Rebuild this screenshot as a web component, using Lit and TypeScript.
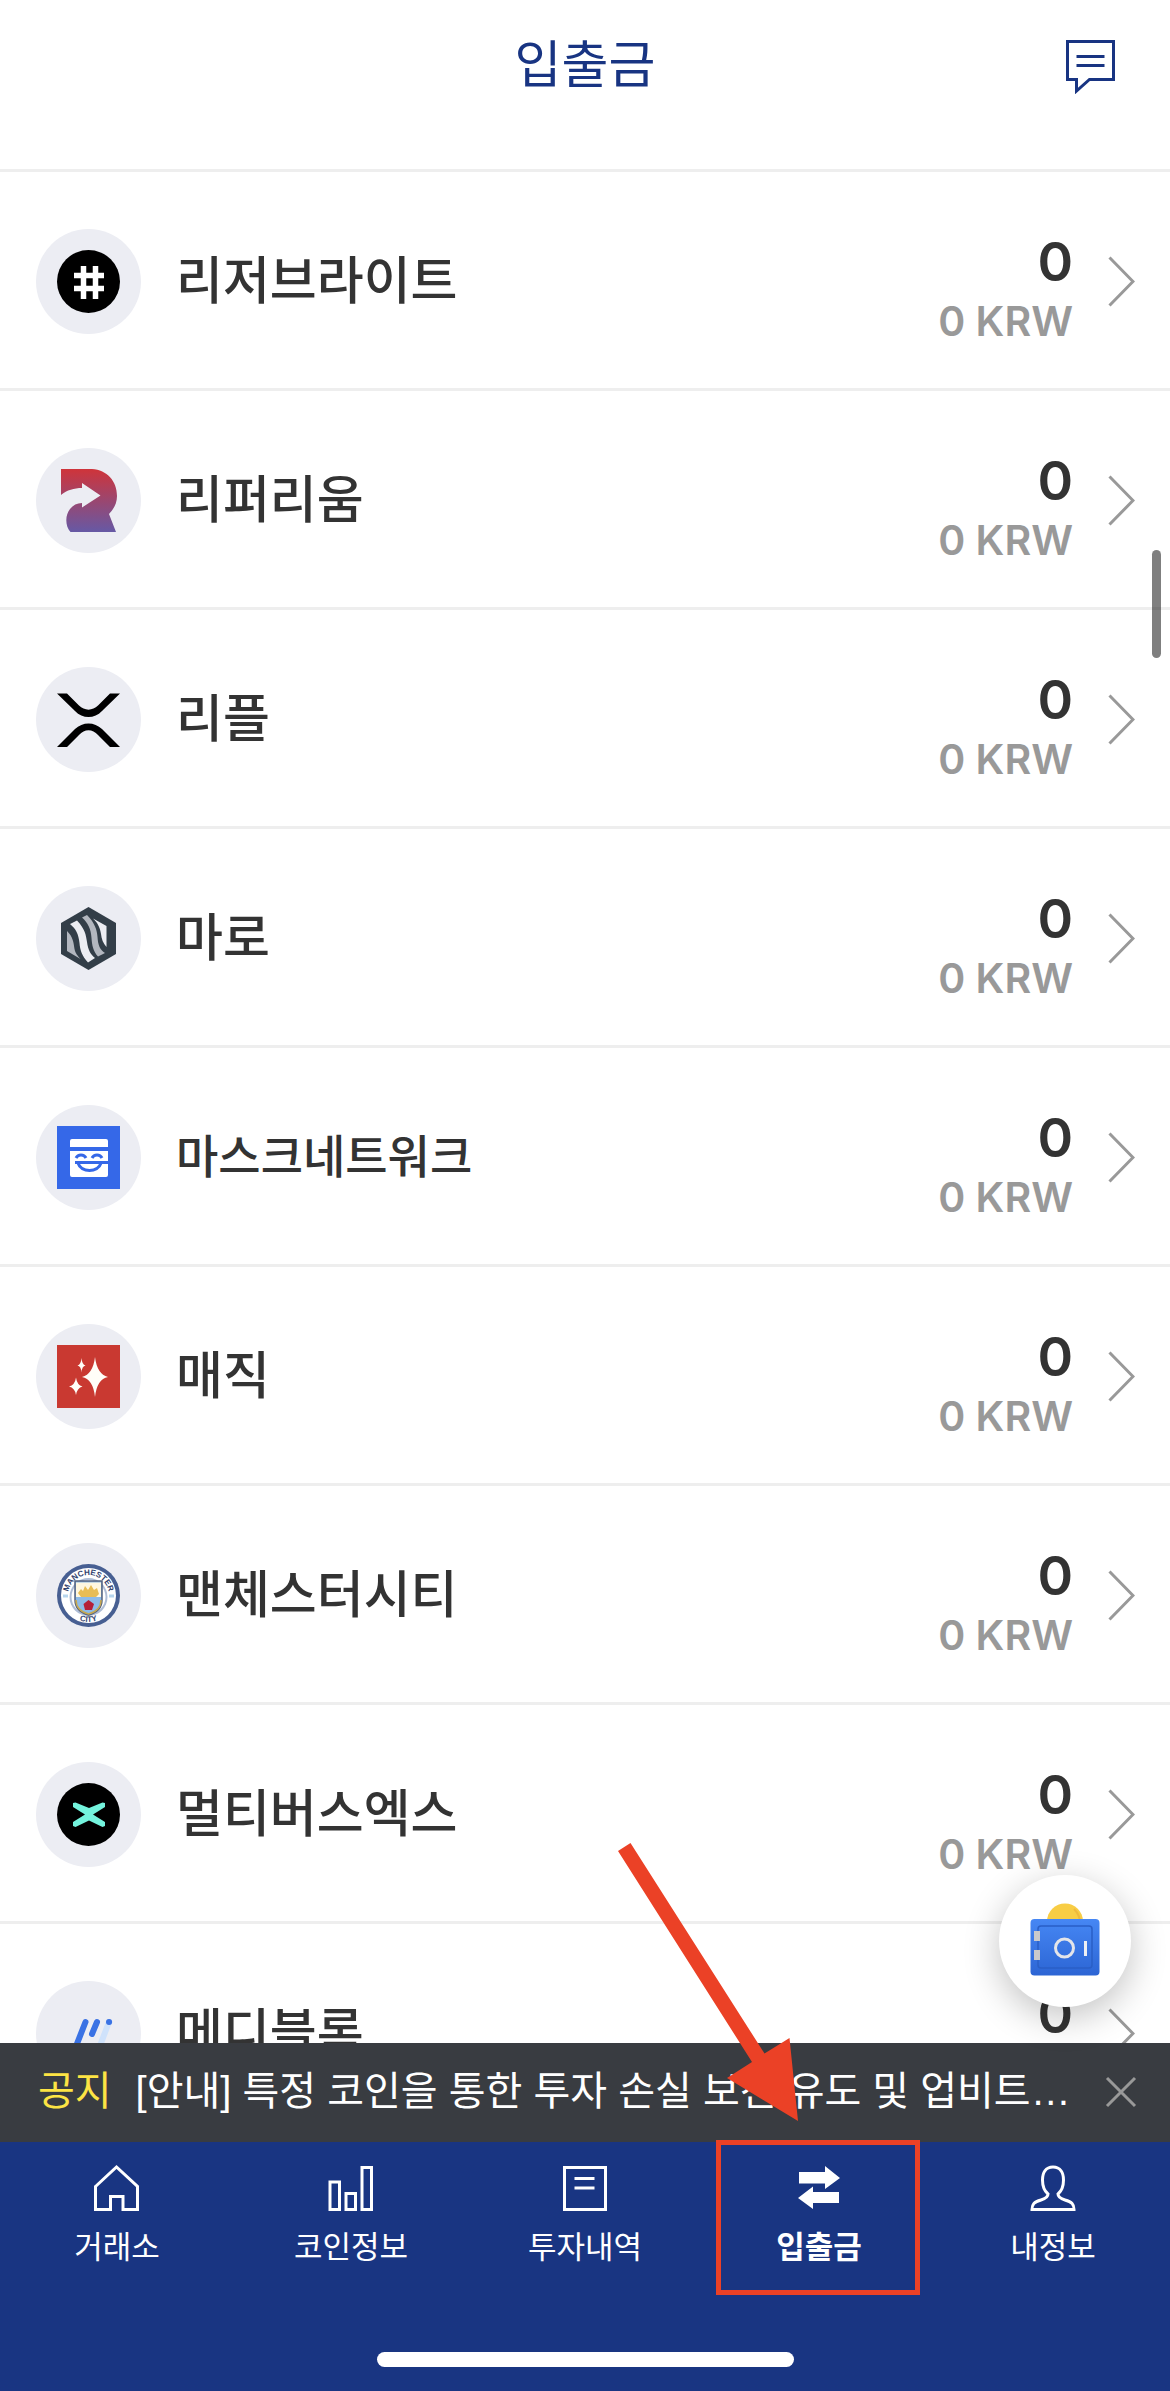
import { LitElement, html, css, svg, TemplateResult } from "lit";
import { customElement, property } from "lit/decorators.js";
import { classMap } from "lit/directives/class-map.js";

interface Coin {
  name: string;
  logo: TemplateResult;
  amount: string;
  value: string;
}

/* Coin marks share a 63 x 63 drawing area. */
const reserveRights = svg`
  <circle cx="31.5" cy="31.5" r="31.5" fill="#000" />
  <path d="M26.5 16v33M38.500 16v33M17 25.5h30M17 38.500h30" fill="none" stroke="#fff" stroke-width="5.500" />
`;

const refereum = svg`
  <defs>
    <linearGradient id="rfr" x1="0" y1="0" x2="0" y2="1">
      <stop offset="0" stop-color="#cf343a" />
      <stop offset="1" stop-color="#6659a5" />
    </linearGradient>
  </defs>
  <path fill="url(#rfr)" d="M4 0H35C50 1 60 12 60 27C60 34 57 40 52 45L59 63H13.500C8 57 8 46 13 40C16 36 20 34 25 34V38.500L43.500 26.500L25 14V19C17 19 10 21 4 26Z" />
`;

const ripple = svg`
  <path d="M0 5.500H10L22 17.500C27.500 23 35.500 23 41 17.500L53 5.500H63L45 23C37.500 31 25.500 31 18 23Z" />
  <path d="M0 59H10L22 47C27.500 40.500 35.500 40.500 41 47L53 59H63L45 41C37.500 33.500 25.500 33.500 18 41Z" />
`;

const maro = svg`
  <path d="M31.500 0L59 16V47L31.500 63L4 47V16Z" fill="#333e48" />
  <path d="M10 24C16 30 16.500 35 17.500 42C18.500 47 21 49 23.500 52L10 44Z" fill="#b3b7bf" />
  <path d="M13 17L20 13.500C28 22 29 28 30 35C31 43 34 48 38 51L31 55.500C25 49 23 43 22.500 36C21.500 27 19 22 13 17Z" fill="#ecedf2" />
  <path d="M25 10.500L30 8C38 16 40 23 40.500 30C41 38 43 43 48 46L41 49.500C36 44 35 38 34.500 31C34 22 31 16 25 10.500Z" fill="#b3b7bf" />
  <path d="M36 11.500L49.500 19V40C46 36 44.500 32 44 27C43 20 40 15 36 11.500Z" fill="#ecedf2" />
`;

const mask = svg`
  <rect width="63" height="63" fill="#3568e8" />
  <path d="M15 13h34a2 2 0 0 1 2 2v6H13v-6a2 2 0 0 1 2-2zM13 25h38v24a2 2 0 0 1-2 2H15a2 2 0 0 1-2-2z" fill="#fff" />
  <path d="M19 32c2-4 8-4 10 0M35 32c2-4 8-4 10 0" fill="none" stroke="#3568e8" stroke-width="3" />
  <path d="M18 36.500h33M21 37c3 10 20 10 23 0" fill="none" stroke="#3568e8" stroke-width="3" />
`;

const magic = svg`
  <rect width="63" height="63" fill="#c93931" />
  <g fill="#fffef8">
    <path d="M38 12Q40 29 51 32Q40 34 38 52Q36 34 25 32Q36 29 38 12Z" />
    <path d="M24.500 13Q25 19.500 28.500 20.500Q25 21 24.500 27.500Q24 21 20.500 20.500Q24 19.500 24.500 13Z" />
    <path d="M19 32.500Q20 40 25.500 41.500Q20 43 19 50Q18 43 12 41.500Q18 40 19 32.500Z" />
  </g>
`;

const manchesterCity = svg`
  <defs>
    <path id="crest-top" d="M11 31.500A20.500 20.500 0 0 1 52 31.500" />
    <path id="crest-bottom" d="M5 31.500A26.500 26.500 0 0 0 58 31.500" />
  </defs>
  <circle cx="31.5" cy="31.5" r="31.5" fill="#475f92" />
  <circle cx="31.500" cy="31.500" r="27.500" fill="#fff" />
  <circle cx="31.500" cy="33" r="19" fill="#aebdd6" />
  <circle cx="31.500" cy="33" r="17" fill="#fff" />
  <path d="M18 17H45V36C45 44 39 49 31.500 51C24 49 18 44 18 36Z" fill="#8ebbe8" stroke="#54617d" stroke-width="1.500" />
  <path d="M19 18.500H44V33H19Z" fill="#fff7df" />
  <path d="M21 29L24 25L26 27L28 22L31 26L34 21L37 26L40 24L42 30L39 33H24Z" fill="#e8bd55" />
  <path d="M31.500 36L37 40L35 46H28L26.500 40Z" fill="#b51f38" />
  <path d="M19 36C19 43 24 48 31.500 50C39 48 44 43 44 36" fill="none" stroke="#c7a84e" stroke-width="1.500" />
  <text class="crest"><textPath href="#crest-top" startOffset="50%" text-anchor="middle">MANCHESTER</textPath></text>
  <text class="crest"><textPath href="#crest-bottom" startOffset="50%" text-anchor="middle">CITY</textPath></text>
  <path d="M6 32h5M52 32h5" stroke="#b6d5ee" stroke-width="3" />
`;

const multiversX = svg`
  <circle cx="31.5" cy="31.5" r="31.5" fill="#000" />
  <path d="M16 20L18.500 19.500L32 25L45.500 19.500L48 20V24L36 31.500L48 39V43L45.500 44L32 37.500L18.500 44L16 43V39L28 31.500L16 24Z" fill="#74f3dd" />
`;

const mediBloc = svg`
  <g fill="none" stroke-linecap="round" stroke-width="6">
    <path d="M52 20L41 49" stroke="#cfe2fb" />
    <path d="M28.500 20L16 52M40 20L35 32M42.500 44L40 50" stroke="#3a72e4" />
    <path d="M52 20h.1" stroke="#3a72e4" />
  </g>
`;

const coins: Coin[] = [
  { name: "리저브라이트", logo: reserveRights, amount: "0", value: "0 KRW" },
  { name: "리퍼리움", logo: refereum, amount: "0", value: "0 KRW" },
  { name: "리플", logo: ripple, amount: "0", value: "0 KRW" },
  { name: "마로", logo: maro, amount: "0", value: "0 KRW" },
  { name: "마스크네트워크", logo: mask, amount: "0", value: "0 KRW" },
  { name: "매직", logo: magic, amount: "0", value: "0 KRW" },
  { name: "맨체스터시티", logo: manchesterCity, amount: "0", value: "0 KRW" },
  { name: "멀티버스엑스", logo: multiversX, amount: "0", value: "0 KRW" },
  { name: "메디블록", logo: mediBloc, amount: "0", value: "0 KRW" },
];

/* Tab icons share a 48 x 48 drawing area. */
const tabs = [
  {
    label: "거래소",
    icon: svg`<path d="M2.500 22.500L23.500 3L44.500 22.500V45.500H30V32.500H17.500V45.500H2.500Z" />`,
  },
  {
    label: "코인정보",
    icon: svg`<path d="M3 18H12.500V45.500H3ZM19 29.500H28.500V45.500H19ZM35 3.500H44.500V45.500H35Z" />`,
  },
  {
    label: "투자내역",
    icon: svg`<path d="M3.500 3.500H44.500V45.500H3.500ZM13.500 14.500H33.500M13.500 24H33.500" />`,
  },
  {
    label: "입출금",
    icon: svg`<path class="solid" d="M4 8H30V2L45 14L30 25V19.500H4ZM44 39H18V45L3 34L18 22.500V28H44Z" />`,
    active: true,
  },
  {
    label: "내정보",
    icon: svg`<path d="M24 3C16.500 3 13.500 9 13.500 16C13.500 22 15.500 27 19 30C19 33 17 34.500 12 36C5 38 3 40 3 45.500H45C45 40 43 38 36 36C31 34.500 29 33 29 30C32.500 27 34.500 22 34.500 16C34.500 9 31.500 3 24 3Z" />`,
  },
];

@customElement("coin-row")
export class CoinRow extends LitElement {
  @property({ attribute: false }) coin!: Coin;

  static styles = css`
    :host {
      display: block;
    }
    .row {
      display: flex;
      align-items: center;
      box-sizing: border-box;
      min-height: 219px;
      padding: 3px 35px 0 36px;
      border-bottom: 3px solid #eee;
      color: #333;
      text-decoration: none;
    }
    .badge {
      display: grid;
      place-items: center;
      flex: none;
      width: 105px;
      height: 105px;
      margin-right: 35px;
      border-radius: 50%;
      background: #ecedf3;
    }
    .logo {
      width: 63px;
      height: 63px;
    }
    .crest {
      font: 700 8px "Liberation Sans", sans-serif;
      fill: #33436e;
    }
    .name {
      flex: 1;
      padding-bottom: 10px;
      font-size: 51px;
      line-height: 60px;
      font-weight: 500;
    }
    .name.long {
      font-size: 46px;
    }
    .figures {
      display: flex;
      flex-direction: column;
      align-items: flex-end;
      margin-right: 34px;
      padding-top: 14px;
      font-family: Inter, "Noto Sans CJK KR", sans-serif;
    }
    .amount {
      font-size: 54px;
      line-height: 64px;
      font-weight: 600;
    }
    .value {
      font-size: 41px;
      line-height: 54px;
      font-weight: 600;
      color: #999;
    }
    .chevron {
      flex: none;
      width: 28px;
      height: 52px;
      fill: none;
      stroke: #999;
      stroke-width: 3;
    }
  `;

  render() {
    const { name, logo, amount, value } = this.coin;
    return html`
      <a class="row" href="#">
        <span class="badge"><svg class="logo" viewBox="0 0 63 63" aria-hidden="true">${logo}</svg></span>
        <span class=${classMap({ name: true, long: name.length > 6 })}>${name}</span>
        <span class="figures">
          <span class="amount">${amount}</span>
          <span class="value">${value}</span>
        </span>
        <svg class="chevron" viewBox="0 0 28 52" aria-hidden="true"><path d="M2.500 1.500L26 25.500L2.500 49.500" /></svg>
      </a>
    `;
  }
}

@customElement("app-root")
export class AppRoot extends LitElement {
  static styles = css`
    :host {
      display: block;
      font-family: "Noto Sans CJK KR", sans-serif;
    }
    .screen {
      position: relative;
      display: flex;
      flex-direction: column;
      height: 100vh;
      overflow: hidden;
      background: #fff;
    }
    button {
      padding: 0;
      border: 0;
      background: none;
      font: inherit;
      color: inherit;
    }
    .header {
      display: grid;
      grid-template-columns: 1fr auto 1fr;
      align-items: center;
      flex: none;
      box-sizing: border-box;
      height: 172px;
      padding: 0 52px 39px;
      border-bottom: 3px solid #eee;
      color: #183482;
    }
    .title {
      grid-column: 2;
      margin: 0;
      padding-bottom: 8px;
      font-size: 51px;
      line-height: 60px;
      font-weight: 400;
    }
    .chat {
      justify-self: end;
      width: 54px;
      height: 58px;
    }
    .chat svg {
      display: block;
      fill: none;
      stroke: currentColor;
      stroke-width: 3;
    }
    .list-area {
      position: relative;
      flex: 1;
      min-height: 0;
    }
    .list {
      height: 100%;
      margin: 0;
      padding: 0;
      overflow: hidden;
      list-style: none;
    }
    .scrollbar {
      position: absolute;
      top: 378px;
      right: 9px;
      width: 9px;
      height: 108px;
      border-radius: 5px;
      background: rgba(0, 0, 0, 0.5);
    }
    .vault {
      position: absolute;
      right: 39px;
      bottom: 36px;
      display: grid;
      place-items: center;
      width: 132px;
      height: 132px;
      border-radius: 50%;
      background: #fff;
      box-shadow: 0 10px 36px rgba(0, 0, 0, 0.24);
    }
    .notice {
      display: flex;
      align-items: center;
      flex: none;
      box-sizing: border-box;
      height: 99px;
      padding: 0 32px 0 38px;
      background: #393c41;
      color: #fff;
      font-family: "Liberation Sans", "Noto Sans CJK KR", sans-serif;
      font-size: 40px;
    }
    .tag,
    .message {
      padding-bottom: 4px;
      line-height: 56px;
    }
    .tag {
      flex: none;
      margin-right: 24px;
      color: #fde444;
    }
    .message {
      flex: 1;
      min-width: 0;
      margin-right: 24px;
      overflow: hidden;
      color: inherit;
      text-decoration: none;
      text-overflow: ellipsis;
      white-space: nowrap;
    }
    .close {
      flex: none;
      width: 34px;
      height: 34px;
    }
    .close svg {
      display: block;
      fill: none;
      stroke: #999;
      stroke-width: 3;
    }
    .bottom {
      flex: none;
      display: flex;
      flex-direction: column;
      justify-content: space-between;
      align-items: center;
      box-sizing: border-box;
      height: 249px;
      padding-bottom: 24px;
      background: #193582;
      color: #fff;
    }
    .tabs {
      display: grid;
      grid-template-columns: repeat(5, 1fr);
      width: 100%;
    }
    .tab {
      position: relative;
      display: flex;
      flex-direction: column;
      align-items: center;
      gap: 11px;
      padding-top: 22px;
      color: inherit;
      font-size: 31px;
      line-height: 44px;
      text-decoration: none;
    }
    .tab svg {
      width: 48px;
      height: 48px;
      fill: none;
      stroke: currentColor;
      stroke-width: 3;
    }
    .tab .solid {
      fill: currentColor;
      stroke: none;
    }
    .tab.active {
      font-weight: 700;
    }
    .frame {
      position: absolute;
      top: -2px;
      left: 14px;
      right: 16px;
      height: 145px;
      border: 5px solid #eb4126;
    }
    .pointer {
      position: absolute;
      left: -86px;
      top: -300px;
      pointer-events: none;
    }
    .tab .pointer {
      width: 184px;
      height: 280px;
      fill: #eb4126;
      stroke: none;
    }
    .home {
      width: 417px;
      height: 15px;
      border-radius: 8px;
      background: #fff;
    }
  `;

  render() {
    return html`
      <div class="screen">
        <header class="header">
          <h1 class="title">입출금</h1>
          <button class="chat" aria-label="문의">
            <svg width="54" height="58" viewBox="0 0 54 58">
              <path d="M3.500 5.500H49.500V43.500H25.500L12.500 55V43.500H3.500ZM12.500 20.500H40.500M12.500 29.500H40.500" />
            </svg>
          </button>
        </header>
        <main class="list-area">
          <ul class="list">
            ${coins.map((coin) => html`<li><coin-row .coin=${coin}></coin-row></li>`)}
          </ul>
          <div class="scrollbar"></div>
          <button class="vault" aria-label="금고">
            <svg width="72" height="76" viewBox="0 2 72 76">
              <defs>
                <linearGradient id="door" x1="0" y1="0" x2="0" y2="1">
                  <stop offset="0" stop-color="#4687f4" />
                  <stop offset="1" stop-color="#2c65d4" />
                </linearGradient>
              </defs>
              <circle cx="36" cy="20.500" r="18" fill="#f8cd45" />
              <path d="M45 8C50 13 51 18 51 22" fill="none" stroke="#efb93d" stroke-width="2" />
              <rect x="1.500" y="18" width="69" height="56.500" rx="4" fill="url(#door)" />
              <rect x="9" y="25" width="54" height="42" rx="3" fill="none" stroke="#2a5fc6" stroke-width="1.500" />
              <path d="M5 30h6v10H5zM5 49h6v10H5z" fill="#c9c9cb" />
              <circle cx="35.500" cy="47" r="9" fill="none" stroke="#e4e5e9" stroke-width="3" />
              <path d="M56.500 40v15" stroke="#eef0f4" stroke-width="3" />
            </svg>
          </button>
        </main>
        <section class="notice">
          <span class="tag">공지</span>
          <a class="message" href="#">[안내] 특정 코인을 통한 투자 손실 보전 유도 및 업비트…</a>
          <button class="close" aria-label="닫기">
            <svg width="34" height="34" viewBox="0 0 34 34"><path d="M3 2L31 30M31 2L3 30" /></svg>
          </button>
        </section>
        <div class="bottom">
          <nav class="tabs">
            ${tabs.map(
              (tab) => html`
                <a class=${classMap({ tab: true, active: !!tab.active })} href="#">
                  <svg viewBox="0 0 48 48" aria-hidden="true">${tab.icon}</svg>
                  <span>${tab.label}</span>
                  ${tab.active
                    ? html`<span class="frame"></span>
                        <svg class="pointer" viewBox="0 0 184 280" aria-hidden="true">
                          <path d="M2 9L14.500 1L148.500 211.500L173.500 196L182 279L111 236L136 220Z" />
                        </svg>`
                    : ""}
                </a>
              `,
            )}
          </nav>
          <div class="home"></div>
        </div>
      </div>
    `;
  }
}
